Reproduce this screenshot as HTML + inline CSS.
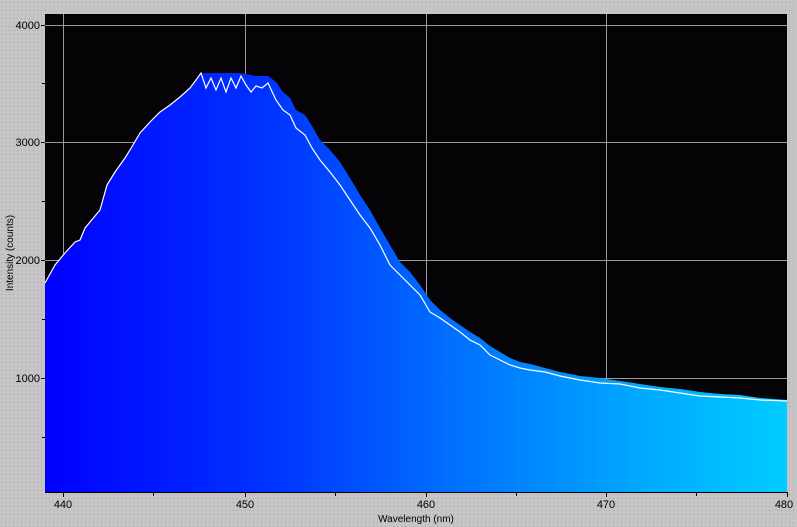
<!DOCTYPE html>
<html><head><style>
body{margin:0;width:797px;height:527px;background:#c6c4c6;overflow:hidden;font-family:"Liberation Sans",sans-serif}
</style></head><body>
<svg width="797" height="527" style="position:absolute;left:0;top:0" font-family="Liberation Sans, sans-serif" font-size="11">
<defs>
<linearGradient id="g" x1="45" x2="787" gradientUnits="userSpaceOnUse">
<stop offset="0" stop-color="#0000ff"/>
<stop offset="0.3" stop-color="#0033ff"/>
<stop offset="0.55" stop-color="#0070ff"/>
<stop offset="0.8" stop-color="#00a8ff"/>
<stop offset="1" stop-color="#00ccff"/>
</linearGradient>
<pattern id="d" width="4" height="4" patternUnits="userSpaceOnUse"><rect x="1" y="2" width="1" height="1" fill="#a8a6a8"/></pattern>
</defs>
<rect width="797" height="527" fill="url(#d)"/>
<rect x="45" y="14" width="742" height="478" fill="#060306"/>
<g stroke="#9a9a9a" stroke-width="1">
<line x1="63.5" y1="14" x2="63.5" y2="492"/><line x1="245.5" y1="14" x2="245.5" y2="492"/>
<line x1="426.5" y1="14" x2="426.5" y2="492"/><line x1="606.5" y1="14" x2="606.5" y2="492"/>
<line x1="45" y1="25.5" x2="787" y2="25.5"/><line x1="45" y1="142.5" x2="787" y2="142.5"/>
<line x1="45" y1="260.5" x2="787" y2="260.5"/><line x1="45" y1="378.5" x2="787" y2="378.5"/>
</g>
<polygon fill="url(#g)" points="45,283 55,265 65,253 75,242 80,240 85,228 90,222 100,210 107,185 115,172 125,158 130,150 140,133 150,122 160,112 170,105 180,97 190,88 196,80 201,73 240,73 256,76 268,76 276,82 283,92 290,98 296,110 305,115 312,126 320,140 330,150 340,162 350,178 360,195 370,210 380,228 390,245 400,262 410,272 420,285 430,300 440,310 450,318 460,325 470,332 480,338 490,346 500,352 510,358 520,362 530,364 545,368 560,372 580,376 600,378 620,381 640,384 660,387 680,389 700,392 720,394 740,395 760,398 787,400 787,492 45,492"/>
<polyline fill="none" stroke="#fff" stroke-width="1.2" points="45,283 55,265 65,253 75,242 80,240 85,228 90,222 100,210 107,185 115,172 125,158 130,150 140,133 150,122 160,112 170,105 180,97 190,88 196,80 201,73 206,88 211,78 216,90 221,78 226,92 231,78 236,88 241,76 246,85 251,92 256,86 262,88 268,83 276,100 283,110 290,115 296,128 305,135 312,148 320,160 330,172 340,185 350,200 360,215 370,228 380,245 390,265 400,275 410,285 420,295 430,312 440,318 450,325 460,332 470,340 480,345 490,355 500,360 510,365 520,368 530,370 545,372 560,376 580,380 600,383 620,384 640,388 660,390 680,393 700,396 720,397 740,398 760,400 787,401"/>
<g stroke="#000" stroke-width="1">
<line x1="45" y1="492.5" x2="787" y2="492.5"/>
<line x1="63.5" y1="492" x2="63.5" y2="497"/><line x1="153.5" y1="492" x2="153.5" y2="496"/>
<line x1="245.5" y1="492" x2="245.5" y2="497"/><line x1="335.5" y1="492" x2="335.5" y2="496"/>
<line x1="426.5" y1="492" x2="426.5" y2="497"/><line x1="516.5" y1="492" x2="516.5" y2="496"/>
<line x1="606.5" y1="492" x2="606.5" y2="497"/><line x1="696.5" y1="492" x2="696.5" y2="496"/>
<line x1="787.5" y1="492" x2="787.5" y2="497"/>
<line x1="41" y1="25.5" x2="45" y2="25.5"/><line x1="42" y1="83.5" x2="45" y2="83.5"/>
<line x1="41" y1="142.5" x2="45" y2="142.5"/><line x1="42" y1="201.5" x2="45" y2="201.5"/>
<line x1="41" y1="260.5" x2="45" y2="260.5"/><line x1="42" y1="319.5" x2="45" y2="319.5"/>
<line x1="41" y1="378.5" x2="45" y2="378.5"/><line x1="42" y1="437.5" x2="45" y2="437.5"/>
</g>
<g fill="#000" text-anchor="end">
<text x="40" y="29">4000</text><text x="40" y="146">3000</text>
<text x="40" y="264">2000</text><text x="40" y="382">1000</text>
</g>
<g fill="#000" text-anchor="middle">
<text x="63" y="508">440</text><text x="245" y="508">450</text><text x="426" y="508">460</text>
<text x="606" y="508">470</text><text x="784" y="508">480</text>
<text x="416" y="522" font-size="10">Wavelength (nm)</text>
<text transform="translate(13,253) rotate(-90)" font-size="10">Intensity (counts)</text>
</g>
</svg>
</body></html>
